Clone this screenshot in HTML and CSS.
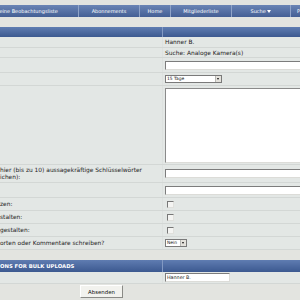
FILE: index.html
```html
<!DOCTYPE html>
<html lang="de">
<head>
    <meta charset="UTF-8">
    <title>Neue Bilder hochladen</title>
    <link rel="stylesheet" href="styles.css">
</head>
<body>
    <div class="navbar">
        <ul class="nav">
            <li class="nav-watch">Meine Beobachtungsliste</li>
            <li class="nav-abo">Abonnements</li>
            <li class="nav-home">Home</li>
            <li class="nav-members">Mitgliederliste</li>
            <li class="nav-search">Suche <span class="caret"></span></li>
            <li class="nav-pm">Private Nachrichten</li>
        </ul>
    </div>

    <table class="form">
        <tr class="tcat"><td class="label"></td><td class="value"></td></tr>
        <tr class="row-name"><td class="label"></td><td class="value">Hanner B.</td></tr>
        <tr class="row-search"><td class="label"></td><td class="value">Suche: Analoge Kamera(s)</td></tr>
        <tr class="row-title"><td class="label"></td><td class="value"><div class="input wide"></div></td></tr>
        <tr class="row-days"><td class="label"></td><td class="value">
            <div class="select days"><span>15 Tage</span><span class="arrow"></span></div>
        </td></tr>
        <tr class="row-text"><td class="label"></td><td class="value"><div class="textarea"></div></td></tr>
        <tr class="row-keywords">
            <td class="label">hier (bis zu 10) aussagekräftige Schlüsselwörter<br>ichen):</td>
            <td class="value"><div class="input wide"></div></td>
        </tr>
        <tr class="row-input"><td class="label"></td><td class="value"><div class="input wide"></div></td></tr>
        <tr class="row-check"><td class="label">zen:</td><td class="value"><span class="checkbox"></span></td></tr>
        <tr class="row-check"><td class="label">stalten:</td><td class="value"><span class="checkbox"></span></td></tr>
        <tr class="row-check"><td class="label">gestalten:</td><td class="value"><span class="checkbox"></span></td></tr>
        <tr class="row-check"><td class="label">orten oder Kommentare schreiben?</td><td class="value">
            <div class="select no"><span>Nein</span><span class="arrow"></span></div>
        </td></tr>
    </table>

    <table class="form bulk">
        <tr class="tcat tcat-bulk"><td class="label">ONS FOR BULK UPLOADS</td><td class="value"></td></tr>
        <tr class="row-owner"><td class="label"></td><td class="value"><div class="input owner">Hanner B.</div></td></tr>
    </table>

    <div class="submit-row">
        <button class="button">Absenden</button>
    </div>
</body>
</html>
```
FILE: styles.css
```css
html, body {
    overflow: hidden;
}
body {
    margin: 0;
    padding-top: 5px;
    background-color: #e3e4e0;
    font-family: "DejaVu Sans", Verdana, sans-serif;
    font-size: 5.9px;
    color: #222;
    width: 300px;
    height: 300px;
}
.navbar {
    height: 12px;
    background: linear-gradient(#6a84b5, #445f95);
    overflow: hidden;
}
.nav {
    list-style-type: none;
    margin: 0 0 0 -25px;
    padding: 0;
    display: flex;
    height: 12px;
    white-space: nowrap;
}
.nav li {
    color: #fff;
    font-size: 5px;
    line-height: 12px;
    text-align: center;
    border-left: 1px solid #8fa3c8;
    flex: none;
}
.nav .nav-watch { width: 103px; border-left: none; }
.nav .nav-abo { width: 60px; }
.nav .nav-home { width: 30px; }
.nav .nav-members { width: 60px; }
.nav .nav-search { width: 58px; }
.nav .nav-pm { width: 80px; text-align: left; padding-left: 6px; }
.caret {
    display: inline-block;
    width: 0;
    height: 0;
    border-left: 2px solid transparent;
    border-right: 2px solid transparent;
    border-top: 3px solid #fff;
    vertical-align: middle;
}
.form {
    border-collapse: collapse;
    table-layout: fixed;
    width: 420px;
    margin-top: 10px;
}
.form td {
    padding: 0;
    border-bottom: 1px solid #d3d7d5;
    background-color: #e3e7e5;
    vertical-align: middle;
    white-space: nowrap;
}
.form .label {
    width: 162px;
    line-height: 7px;
}
.form .value {
    padding-left: 2px;
    border-left: 1px solid #dde1df;
}
.tcat td {
    height: 10px;
    background: linear-gradient(#5f7cb1, #3c5990);
    border-bottom: none;
}
.tcat .value {
    border-left: 1px solid #8299c3;
}
.tcat-bulk td {
    height: 12px;
    color: #fff;
    font-weight: bold;
    font-size: 5.3px;
}
.row-name td { height: 10px; }
.row-search td { height: 9px; }
.row-title td { height: 14px; }
.row-days td { height: 12px; }
.row-text td { height: 78px; }
.row-keywords td { height: 17px; }
.row-input td { height: 14px; }
.row-check td { height: 12px; }
.row-owner td { height: 11px; }
.input {
    height: 7px;
    background-color: #fff;
    border-top: 1px solid #7c7c7c;
    border-left: 1px solid #7c7c7c;
    border-bottom: 1px solid #dcdcd8;
    border-right: 1px solid #dcdcd8;
}
.input.wide {
    width: 240px;
}
.input.owner {
    width: 62px;
    font-size: 4.8px;
    line-height: 7px;
    padding-left: 1px;
    color: #111;
}
.textarea {
    height: 73px;
    width: 240px;
    background-color: #fff;
    border-top: 1px solid #8a8a8a;
    border-left: 1px solid #8a8a8a;
    border-bottom: 1px solid #dcdcd8;
    border-right: 1px solid #dcdcd8;
}
.select {
    display: flex;
    align-items: center;
    justify-content: space-between;
    height: 6px;
    background-color: #fff;
    border: 1px solid #7a7a7a;
    font-size: 4.4px;
    line-height: 6px;
    color: #111;
    padding-left: 1px;
}
.select.days { width: 54px; }
.select.no { width: 19px; }
.arrow {
    width: 5px;
    height: 6px;
    background-color: #e4e2dc;
    border-left: 1px solid #b8b8b4;
    position: relative;
}
.arrow::after {
    content: "";
    position: absolute;
    left: 1px;
    top: 2px;
    border-left: 1.5px solid transparent;
    border-right: 1.5px solid transparent;
    border-top: 2px solid #111;
}
.checkbox {
    display: block;
    width: 5px;
    height: 5px;
    margin-left: 2px;
    background-color: #f4f4f2;
    border-top: 1px solid #777;
    border-left: 1px solid #777;
    border-bottom: 1px solid #e0e0dc;
    border-right: 1px solid #e0e0dc;
}
.submit-row {
    padding: 1px 0 0 80px;
}
.button {
    width: 43px;
    height: 13px;
    padding: 0;
    font-family: "DejaVu Sans", Verdana, sans-serif;
    font-size: 5.4px;
    color: #111;
    background-color: #f2f2ee;
    border-top: 1px solid #fff;
    border-left: 1px solid #fff;
    border-bottom: 1px solid #8a8a86;
    border-right: 1px solid #8a8a86;
}
```
